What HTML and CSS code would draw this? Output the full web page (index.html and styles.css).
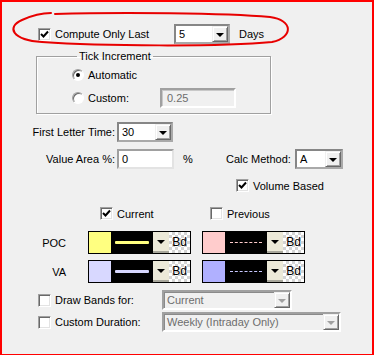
FILE: index.html
```html
<!DOCTYPE html>
<html lang="en">
<head>
  <meta charset="UTF-8" />
  <title>Profile Settings</title>
  <link rel="stylesheet" href="styles.css">
</head>
<body>
  <div class="dialog">
    <!-- hand drawn highlight -->
    <svg class="mark" width="374" height="60" viewBox="0 0 374 60">
      <path d="M55 14 C120 12, 225 13, 270 17 C293 20, 294 37, 272 42 C220 47, 100 46, 42 42 C12 40, 6 27, 22 20 C33 15, 44 13, 51 13" />
    </svg>

    <div class="row compute">
      <label class="check w136"><span class="box on"><svg viewBox="0 0 9 9"><path d="M1 4 L3.5 6.5 L8 1.5" /></svg></span>Compute Only Last</label>
      <div class="combo w56"><span class="val">5</span><span class="btn"><i></i></span></div>
      <span class="after">Days</span>
    </div>

    <fieldset class="group">
      <legend>Tick Increment</legend>
      <div class="rrow"><span class="radio on"></span>Automatic</div>
      <div class="rrow"><span class="radio"></span><span class="rlabel">Custom:</span><span class="edit off w76">0.25</span></div>
    </fieldset>

    <div class="row first">
      <span class="lbl">First Letter Time:</span>
      <div class="combo w56"><span class="val">30</span><span class="btn"><i></i></span></div>
    </div>

    <div class="row value">
      <span class="lbl">Value Area %:</span>
      <span class="edit w57">0</span>
      <span class="pct">%</span>
      <span class="calc">Calc Method:</span>
      <div class="combo w48"><span class="val">A</span><span class="btn"><i></i></span></div>
    </div>

    <div class="row volume">
      <label class="check"><span class="box on"><svg viewBox="0 0 9 9"><path d="M1 4 L3.5 6.5 L8 1.5" /></svg></span>Volume Based</label>
    </div>

    <div class="row which">
      <label class="check w110"><span class="box on"><svg viewBox="0 0 9 9"><path d="M1 4 L3.5 6.5 L8 1.5" /></svg></span>Current</label>
      <label class="check"><span class="box"></span>Previous</label>
    </div>

    <div class="row pen poc">
      <span class="plabel">POC</span>
      <div class="style">
        <span class="swatch" style="background:#ffff80"></span>
        <span class="line"><i class="solid" style="background:#ffff80"></i></span>
        <span class="sbtn"><i></i></span>
        <span class="bd">Bd</span>
      </div>
      <div class="style">
        <span class="swatch" style="background:#ffcccc"></span>
        <span class="line"><i class="dash" style="color:#ffcccc"></i></span>
        <span class="sbtn"><i></i></span>
        <span class="bd">Bd</span>
      </div>
    </div>

    <div class="row pen va">
      <span class="plabel">VA</span>
      <div class="style">
        <span class="swatch" style="background:#d8d8ff"></span>
        <span class="line"><i class="solid" style="background:#d8d8ff"></i></span>
        <span class="sbtn"><i></i></span>
        <span class="bd">Bd</span>
      </div>
      <div class="style">
        <span class="swatch" style="background:#b0b0ff"></span>
        <span class="line"><i class="dash" style="color:#c8c8ff"></i></span>
        <span class="sbtn"><i></i></span>
        <span class="bd">Bd</span>
      </div>
    </div>

    <div class="row bands">
      <label class="check w124"><span class="box"></span>Draw Bands for:</label>
      <div class="combo off w130"><span class="val">Current</span><span class="btn"><i></i></span></div>
    </div>

    <div class="row duration">
      <label class="check w124"><span class="box"></span>Custom Duration:</label>
      <div class="combo off w179"><span class="val">Weekly (Intraday Only)</span><span class="btn"><i></i></span></div>
    </div>
  </div>
</body>
</html>
```

FILE: styles.css
```css
* {
  box-sizing: border-box;
  margin: 0;
  padding: 0;
}

html, body {
  background: #f0f0f0;
  font-family: "Liberation Sans", Arial, sans-serif;
  font-size: 11px;
  color: #000;
}

.dialog {
  position: relative;
  width: 374px;
  height: 355px;
  border: 2px solid #ff0000;
  border-bottom-width: 1px;
  background: #f0f0f0;
}

.mark {
  position: absolute;
  left: -2px;
  top: -2px;
  pointer-events: none;
}

.mark path {
  fill: none;
  stroke: #e80000;
  stroke-width: 2;
  stroke-linecap: round;
}

.row {
  display: flex;
  align-items: center;
}

.w56 { width: 56px; }
.w48 { width: 48px; }
.w57 { width: 57px; }
.w76 { width: 76px; }
.w110 { width: 110px; }
.w124 { width: 124px; }
.w130 { width: 130px; }
.w136 { width: 136px; }
.w179 { width: 179px; }

/* checkbox */
.check {
  display: flex;
  align-items: center;
  flex-shrink: 0;
}

.box {
  width: 13px;
  height: 13px;
  margin-right: 4px;
  background: #fff;
  border: 1px solid;
  border-color: #a0a0a0 #fff #fff #a0a0a0;
  box-shadow: inset 1px 1px #696969, inset -1px -1px #e3e3e3;
  display: flex;
  align-items: center;
  justify-content: center;
}

.box svg {
  width: 9px;
  height: 9px;
  display: none;
}

.box.on svg { display: block; }

.box path {
  fill: none;
  stroke: #000;
  stroke-width: 2;
}

/* combo */
.combo {
  height: 20px;
  flex-shrink: 0;
  display: flex;
  background: #fff;
  border: 2px solid;
  border-color: #868686 #a9a9a9 #a9a9a9 #868686;
}

.combo .val {
  flex: 1;
  padding-left: 3px;
  line-height: 16px;
  white-space: nowrap;
  overflow: hidden;
}

.combo .btn {
  width: 16px;
  height: 16px;
  background: #f0f0f0;
  border: 1px solid;
  border-color: #f0f0f0 #696969 #696969 #f0f0f0;
  box-shadow: inset 1px 1px #fff, inset -1px -1px #a0a0a0;
  display: flex;
  align-items: center;
  justify-content: center;
}

.combo .btn i, .sbtn i {
  width: 0;
  height: 0;
  border-left: 4px solid transparent;
  border-right: 4px solid transparent;
  border-top: 4px solid #000;
  margin-top: 1px;
}

.combo.off {
  background: #f0f0f0;
  color: #6d6d6d;
  border-color: #a0a0a0 #fff #fff #a0a0a0;
  box-shadow: inset 1px 1px #8a8a8a;
}

.combo.off .btn i { border-top-color: #a0a0a0; }

/* edit box */
.edit {
  height: 20px;
  flex-shrink: 0;
  background: #fff;
  padding-left: 3px;
  line-height: 16px;
  border: 2px solid;
  border-color: #a0a0a0 #e3e3e3 #e3e3e3 #a0a0a0;
}

.edit.off {
  background: #f0f0f0;
  color: #6d6d6d;
  padding-left: 5px;
  border-color: #a0a0a0 #fff #fff #a0a0a0;
  box-shadow: inset 1px 1px #c8c8c8;
}

/* rows */
.compute {
  margin-top: 22px;
  padding-left: 36px;
}

.after { margin-left: 9px; }

.group {
  margin: 6px 0 0 34px;
  width: 235px;
  border: 1px solid #a0a0a0;
  box-shadow: 1px 1px #fff, inset 1px 1px #fff;
  padding: 2px 0 5px 35px;
}

.group legend {
  margin-left: 5px;
  padding: 0 2px;
  line-height: 13px;
}

.rrow {
  display: flex;
  align-items: center;
  height: 20px;
}

.rrow + .rrow { margin-top: 3px; }

.radio {
  width: 12px;
  height: 12px;
  margin-right: 4px;
  border-radius: 50%;
  background: #fff;
  border: 1px solid;
  border-color: #a0a0a0 #fff #fff #a0a0a0;
  box-shadow: inset 1px 1px #696969;
  display: flex;
  align-items: center;
  justify-content: center;
}

.radio.on::after {
  content: "";
  width: 4px;
  height: 4px;
  border-radius: 50%;
  background: #000;
}

.rlabel { width: 72px; }

.first { margin-top: 8px; }

.lbl {
  width: 115px;
  text-align: right;
  padding-right: 2px;
  flex-shrink: 0;
}

.value { margin-top: 7px; }

.pct {
  width: 52px;
  padding-left: 9px;
  flex-shrink: 0;
}

.calc {
  width: 69px;
  flex-shrink: 0;
}

.volume {
  margin-top: 10px;
  padding-left: 234px;
}

.which {
  margin-top: 15px;
  padding-left: 98px;
}

/* pen styles */
.pen { height: 23px; }
.poc { margin-top: 11px; }
.va { margin-top: 6px; }

.plabel {
  width: 64px;
  text-align: right;
  margin-right: 22px;
}

.style {
  display: flex;
  width: 103px;
  height: 23px;
  border: 1px solid #000;
  background: #000;
}

.style + .style { margin-left: 11px; }

.swatch { width: 22px; }

.line {
  width: 42px;
  display: flex;
  align-items: center;
  justify-content: center;
}

.line .solid {
  width: 34px;
  height: 3px;
  border-radius: 1px;
}

.line .dash {
  width: 32px;
  border-top: 1px dashed;
}

.sbtn {
  width: 16px;
  background: #ece9d8;
  border-bottom: 2px solid #a8a79c;
  display: flex;
  align-items: center;
  justify-content: center;
}

.bd {
  flex: 1;
  text-align: center;
  line-height: 21px;
  font-size: 12px;
  background-color: #fff;
  background-image: repeating-conic-gradient(#d4d4d4 0 25%, #fff 0 50%);
  background-size: 6px 6px;
}

.bands {
  margin-top: 7px;
  padding-left: 36px;
}

.duration {
  margin-top: 2px;
  padding-left: 36px;
}
```
